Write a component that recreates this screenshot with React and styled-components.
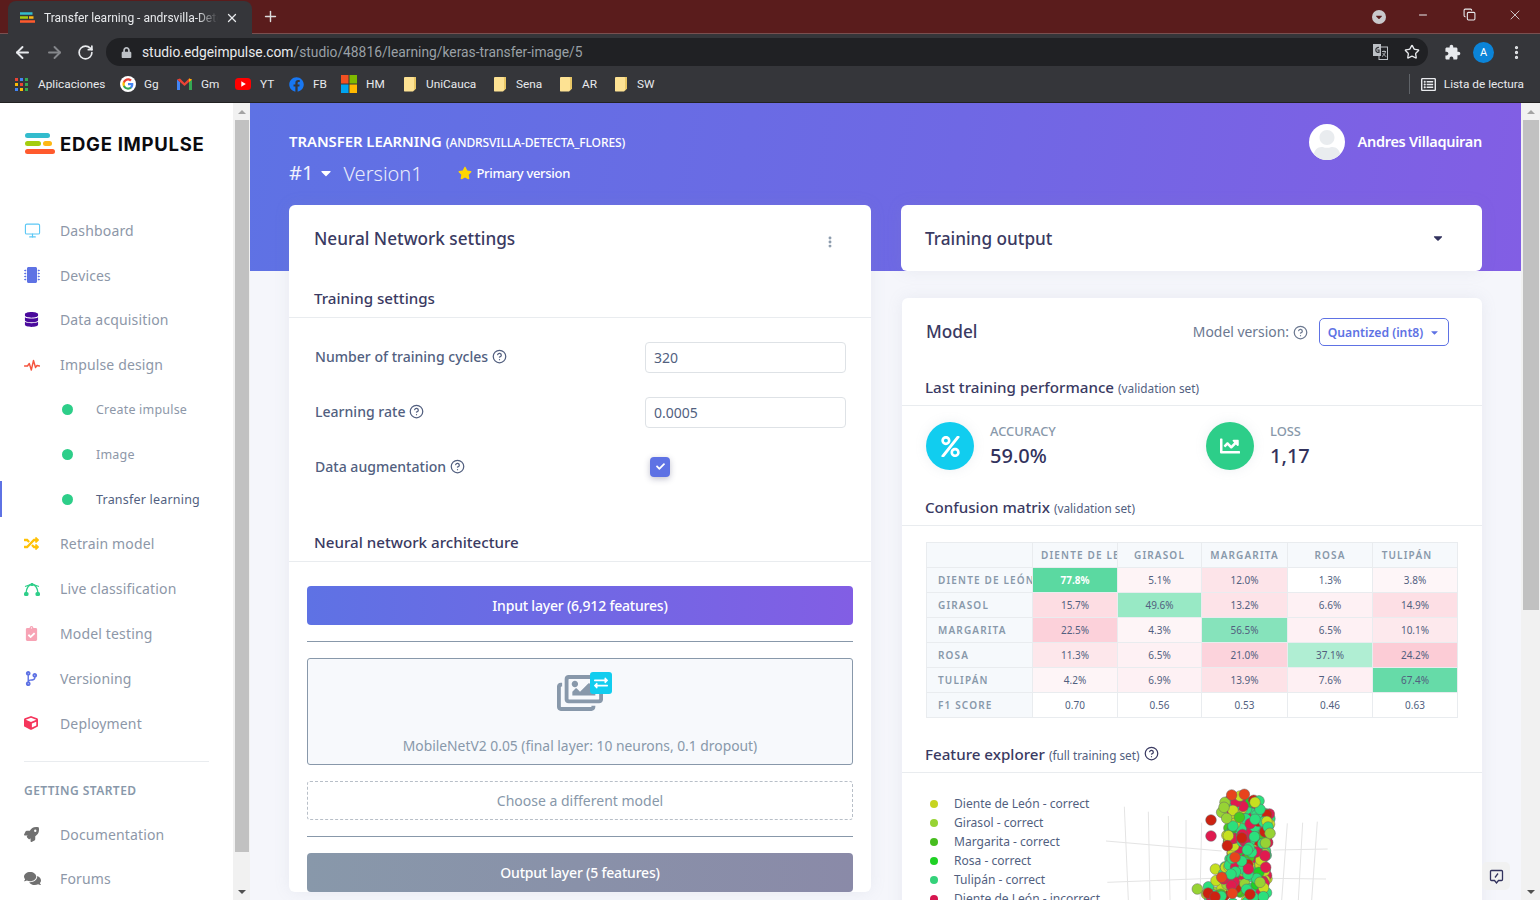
import React from 'react';
import styled, { createGlobalStyle } from 'styled-components';
import { ArrowLeft, ArrowRight, RotateCw, Star as StarLine, MoreVertical, Plus, X, Minus, Copy, Monitor, CircleHelp } from 'lucide-react';
import { FaLock, FaMicrochip, FaDatabase, FaRandom, FaClipboardCheck, FaCodeBranch, FaCube, FaRocket, FaComments, FaPercent, FaChartLine, FaRegImages, FaExchangeAlt, FaStar, FaCaretDown, FaRegListAlt, FaUser, FaFacebook, FaCheck } from 'react-icons/fa';

const GlobalStyle = createGlobalStyle`
  html, body { margin: 0; padding: 0; height: 900px; overflow: hidden; background: #fff; }
  * { box-sizing: border-box; }
  body { font-family: "Noto Sans", "Open Sans", sans-serif; }
`;

const Page = styled.div`width: 1540px; height: 900px; display: flex; flex-direction: column; overflow: hidden;`;

/* ---------- browser chrome ---------- */
const Browser = styled.header`flex: 0 0 103px; display: flex; flex-direction: column; font-family: Roboto, "Liberation Sans", sans-serif; color: #e8eaed; border-bottom: 1px solid #222;`;
const TabStrip = styled.div`height: 34px; background: #5a1c1c; display: flex; align-items: flex-end; padding-left: 8px; border-bottom: 1px solid #7a5050;`;
const Tab = styled.div`width: 244px; height: 33px; margin-bottom: -1px; background: #35363a; border-radius: 8px 8px 0 0; display: flex; align-items: center; padding: 0 12px; font-size: 12px; white-space: nowrap;`;
const TabTitle = styled.span`margin: 0 7px 0 9px; width: 174px; overflow: hidden; color: #e8eaed; -webkit-mask-image: linear-gradient(90deg, #000 88%, transparent); mask-image: linear-gradient(90deg, #000 88%, transparent);`;
const NewTab = styled.div`margin: 0 0 7px 8px; width: 20px; height: 20px; color: #ddd; display: flex; align-items: center; justify-content: center;`;
const WindowControls = styled.div`margin-left: auto; height: 33px; display: flex; align-items: center; padding: 0 2px 4px 0; color: #e8eaed;`;
const WinButton = styled.div`width: 46px; display: flex; justify-content: center; align-items: center;`;
const ProfileDot = styled.div`width: 14px; height: 14px; margin-right: 14px; margin-top: 5px; border-radius: 50%; background: #c9c9cc; color: #5a1c1c; display: flex; align-items: center; justify-content: center;`;
const Toolbar = styled.div`height: 32px; background: #35363a; display: flex; align-items: center; padding: 4px 0 0 13px;`;
const NavBtn = styled.div`width: 32px; display: flex; color: ${p => p.$dim ? '#85878b' : '#e8eaed'};`;
const Omnibox = styled.div`width: 1322px; height: 28px; margin-left: -3px; background: #202124; border-radius: 14px; display: flex; align-items: center; padding: 0 8px 0 15px; font-size: 13.8px;`;
const Url = styled.span`margin-left: 10px; color: #9aa0a6; flex: 1;`;
const UrlHost = styled.span`color: #e8eaed;`;
const OmniIcon = styled.span`display: flex; margin-left: ${p => p.$gap || 0}px; color: ${p => p.$c || '#e8eaed'};`;
const Account = styled.div`width: 21px; height: 21px; border-radius: 50%; background: #0b84d8; color: #fff; font-size: 11px; display: flex; align-items: center; justify-content: center; margin-left: 12px;`;
const BookmarkBar = styled.div`height: 36px; background: #35363a; display: flex; align-items: center; padding-left: 15px; font-size: 11.8px; color: #e8eaed;`;
const Bookmark = styled.div`width: ${p => p.$w}px; display: flex; align-items: center; gap: ${p => p.$gap || 9}px; white-space: nowrap;`;
const BarRule = styled.div`width: 1px; height: 20px; background: #5f6368; margin-left: auto; margin-right: 11px;`;
const ReadingList = styled.div`display: flex; align-items: center; gap: 8px; padding-right: 16px;`;
const Folder = styled.span`width: 12px; height: 15px; background: #fde293; border-radius: 1px; display: block; clip-path: polygon(0 0, 100% 0, 100% 80%, 75% 100%, 0 100%); box-shadow: inset -2px 0 0 #e9c766;`;

/* ---------- workspace ---------- */
const Workspace = styled.div`flex: 1; min-height: 0; display: flex;`;
const Sidebar = styled.aside`width: 233px; flex: none; background: #fff; display: flex; flex-direction: column; overflow: hidden;`;
const Brand = styled.div`height: 82px; padding: 30px 0 0 25px; display: flex; align-items: flex-start; gap: 5px;`;
const BrandName = styled.div`font-family: Inter, "Liberation Sans", sans-serif; font-weight: 700; font-size: 18.5px; letter-spacing: 0.72px; color: #0b0b10; line-height: 23px; white-space: nowrap;`;
const NavList = styled.nav`padding-top: 24.3px;`;
const NavItem = styled.div`height: ${p => p.$tall ? 45 : 44.8}px; display: flex; align-items: center; padding-left: ${p => p.$sub ? 62 : 24}px; font-size: ${p => p.$sub ? 12.5 : 14}px; letter-spacing: ${p => p.$sub ? 0.2 : 0.15}px; color: ${p => p.$active ? '#525f7f' : '#8d97a8'}; position: relative;
  ${p => p.$active ? `&::before { content: ""; position: absolute; left: 0; top: 4px; bottom: 4px; width: 2px; background: #5e72e4; }` : ''}
`;
const NavIcon = styled.span`width: 36px; flex: none; display: flex; color: ${p => p.$c};`;
const NavDot = styled.span`width: 11px; height: 11px; border-radius: 50%; background: #2dce89; margin-right: 23px; flex: none;`;
const SideRule = styled.hr`margin: 16px 24px 0; border: 0; border-top: 1px solid #e9ecef; width: 185px;`;
const SideHeading = styled.div`padding: 21px 0 13px 24px; font-size: 12px; font-weight: 600; letter-spacing: 0.45px; color: #8898aa; line-height: 16px;`;

const ScrollTrack = styled.div`width: ${p => p.$w}px; flex: none; background: #f1f1f1; display: flex; flex-direction: column; align-items: center; position: relative;`;
const ScrollArrow = styled.div`height: 17px; flex: none; display: flex; align-items: center; justify-content: center; margin-top: ${p => p.$auto ? 'auto' : '0'}; color: ${p => p.$dark ? '#505050' : '#a3a3a3'};`;
const Triangle = styled.span`width: 0; height: 0; border-left: 4px solid transparent; border-right: 4px solid transparent; ${p => p.$down ? 'border-top: 4px solid currentColor;' : 'border-bottom: 4px solid currentColor;'}`;
const ScrollThumb = styled.div`width: calc(100% - 3px); height: ${p => p.$h}px; background: #c1c1c1;`;

const Main = styled.main`flex: 1; min-width: 0; background: linear-gradient(100deg, #5e72e4 0%, #6f68e4 55%, #825ee4 100%) top / 100% 168px no-repeat, #f5f6fb; padding: 21px 39px 0; overflow: hidden; position: relative;`;
const TopRow = styled.div`display: flex; justify-content: space-between; align-items: center; height: 36px;`;
const PageTitle = styled.div`color: #fff; font-size: 14.8px; font-weight: 600; white-space: nowrap; padding-bottom: 2px;`;
const PageSub = styled.span`font-size: 12px; font-weight: 500; margin-left: 4px; letter-spacing: -0.1px;`;
const User = styled.div`display: flex; align-items: center; gap: 12px; color: #fff; font-size: 14.5px; font-weight: 600; letter-spacing: -0.28px;`;
const UserName = styled.span`padding-bottom: 2px;`;
const Avatar = styled.div`width: 36px; height: 36px; border-radius: 50%; background: #fff; color: #e9ecef; display: flex; align-items: flex-end; justify-content: center; overflow: hidden;`;
const VersionRow = styled.div`height: 28px; margin-bottom: 17px; padding-bottom: 2px; display: flex; align-items: center; color: #fff;`;
const VersionNo = styled.span`font-size: 20px; line-height: 26px; font-weight: 400; color: #f2f3fd;`;
const VersionName = styled.span`font-size: 20px; font-weight: 300; color: #e9ebfb; width: 115px; margin-left: 9px;`;
const Primary = styled.span`display: flex; align-items: center; gap: 4px; font-size: 13px; font-weight: 500; letter-spacing: -0.3px;`;
const Columns = styled.div`display: grid; grid-template-columns: 582px 581px; gap: 30px; align-items: start;`;
const Stack = styled.div`display: flex; flex-direction: column; gap: 27px;`;
const Card = styled.section`background: #fff; border-radius: 6px; box-shadow: 0 0 16px rgba(136,152,170,.12); margin-left: ${p => p.$inset || 0}px;`;
const CardHead = styled.div`height: 66px; padding: 0 25px 0 ${p => p.$pad || 25}px; display: flex; align-items: center; justify-content: space-between; font-size: 17.2px; font-weight: 500; color: #3a3a62;`;
const SectionHead = styled.div`height: ${p => p.$h || 47}px; padding: 0 ${p => p.$pad || 25}px ${p => p.$b || 9}px; display: flex; align-items: flex-end; font-size: 15.15px; font-weight: 500; color: #3a3a62; border-bottom: 1px solid #e9ecef;`;
const Small = styled.span`font-size: 11.8px; font-weight: 400; margin-left: 4px; color: #525f7f; padding-bottom: 1px;`;
const Form = styled.div`padding: 24px 25px 0 26px; display: flex; flex-direction: column; gap: 24px;`;
const FormRow = styled.div`display: flex; align-items: center; height: 31px;`;
const FormLabel = styled.div`width: 330px; display: flex; align-items: center; gap: 4px; font-size: 14.05px; font-weight: 500; color: #525f7f; padding-bottom: 2px;`;
const Field = styled.div`width: 201px; height: 31px; border: 1px solid #dee2e6; border-radius: 4px; padding: 0 8px; display: flex; align-items: center; font-size: 14px; color: #525f7f; background: #fff;`;
const Check = styled.div`width: 20px; height: 20px; margin: -2px 0 0 5px; border-radius: 4px; background: #5e72e4; color: #fff; display: flex; align-items: center; justify-content: center; box-shadow: 0 2px 6px rgba(50,50,93,.3);`;
const Arch = styled.div`padding: 24px 18px 0 18px; display: flex; flex-direction: column;`;
const LayerBar = styled.div`height: 39px; border-radius: 4px; display: flex; align-items: center; justify-content: center; font-size: 14px; font-weight: 500; color: #fff; letter-spacing: -0.2px; background: ${p => p.$muted ? 'linear-gradient(90deg,#8898aa,#8a8aa8)' : 'linear-gradient(90deg,#5e72e4,#825ee4)'};`;
const ArchRule = styled.hr`margin: 16px 0; border: 0; border-top: 1px solid #8898aa;`;
const ModelBox = styled.div`height: 107px; border: 1px solid #8898aa; border-radius: 3px; background: #f7f9fc; display: flex; flex-direction: column; align-items: center; padding-top: 13px; color: #8898aa; font-size: 13.85px;`;
const ModelIcon = styled.div`position: relative; width: 55px; height: 44px; margin: 0 0 20px 9px; color: #8898aa; display: flex; align-items: flex-end;`;
const SwapBadge = styled.span`position: absolute; right: 0; top: 0; width: 22px; height: 22px; border-radius: 3px; background: #11cdef; color: #fff; display: flex; align-items: center; justify-content: center;`;
const Dashed = styled.div`height: 39px; margin-top: 16px; border: 1px dashed #b8bfc8; border-radius: 3px; display: flex; align-items: center; justify-content: center; font-size: 14px; color: #8898aa;`;
const ModelTop = styled.div`height: 62px; padding: 20px 33px 0 24px; display: flex; align-items: flex-start; justify-content: space-between;`;
const ModelTitle = styled.div`font-size: 17.2px; font-weight: 500; color: #3a3a62; line-height: 28px;`;
const VersionPick = styled.div`display: flex; align-items: center; gap: 4px; font-size: 13.9px; color: #6b7890; height: 28px;`;
const VersionLabel = styled.span`padding-bottom: 2px;`;
const Select = styled.div`margin-left: 7px; width: 130px; height: 28px; border: 1px solid #5e72e4; border-radius: 5px; display: flex; align-items: center; justify-content: center; gap: 6px; color: #5e72e4; font-size: 12.2px; font-weight: 600;`;
const Metrics = styled.div`display: grid; grid-template-columns: 280px 1fr; padding: 16px 24px 0;`;
const Metric = styled.div`display: flex; gap: 16px; align-items: flex-start;`;
const MetricDisc = styled.div`width: 48px; height: 48px; border-radius: 50%; background: ${p => p.$c}; color: #fff; display: flex; align-items: center; justify-content: center; box-shadow: 0 0 12px rgba(136,152,170,.15);`;
const MetricLabel = styled.div`font-size: 12.9px; font-weight: 500; color: #8898aa; line-height: 16px; margin-top: 1px;`;
const MetricValue = styled.div`font-size: 20px; font-weight: 500; color: #32325d; line-height: 28px; margin-top: 3px;`;
const Matrix = styled.table`margin: 16px 0 0 24px; width: 531px; border-collapse: collapse; table-layout: fixed; font-size: 10px; color: #525f7f;`;
const MatrixHead = styled.th`height: 25px; border: 1px solid #e9ecef; background: #f6f9fc; color: #8898aa; font-weight: 600; font-size: 10px; letter-spacing: 1.15px; overflow: hidden; white-space: nowrap; text-align: ${p => p.$left ? 'left' : 'center'}; padding: 0 ${p => p.$left ? 0 : p.$tail ? 24 : 8}px 0 ${p => p.$left ? 11 : 8}px;`;
const MatrixCell = styled.td`height: 25px; border: 1px solid #e9ecef; background: ${p => p.$bg}; color: ${p => p.$strong ? '#fff' : '#525f7f'}; font-weight: ${p => p.$strong ? 700 : 400}; text-align: center; padding: 0;`;
const Explorer = styled.div`display: flex; padding: 21px 0 0 28px; height: 200px;`;
const Legend = styled.ul`list-style: none; margin: 0; padding: 0; width: 170px; flex: none;`;
const LegendItem = styled.li`height: 19px; display: flex; align-items: center; gap: 16px; font-size: 12.05px; color: #525f7f; white-space: nowrap;`;
const LegendDot = styled.span`width: 8px; height: 8px; border-radius: 50%; background: ${p => p.$c}; flex: none;`;
const Plot = styled.svg`margin-top: -14px; flex: none; display: block;`;
const Feedback = styled.button`position: absolute; right: 11px; bottom: 10px; width: 28px; height: 28px; border: 0; padding: 0; border-radius: 5px; background: #f1f1f1; color: #32325d; display: flex; align-items: center; justify-content: center;`;

/* ---------- drawings ---------- */
const LogoMark = () => (
  <svg width="30" height="21" viewBox="0 0 30 21">
    <rect x="0" y="0" width="25" height="5" rx="2.5" fill="#33bccd" />
    <rect x="0" y="8" width="16" height="5" rx="2.5" fill="#a4cd0e" />
    <rect x="18" y="8" width="9" height="5" rx="2.5" fill="#fdb714" />
    <rect x="0" y="16" width="30" height="5" rx="2.5" fill="#ff5a2d" />
  </svg>
);
const FavMark = () => (
  <svg width="15" height="13" viewBox="0 0 30 21" style={{ flex: 'none' }}>
    <rect x="0" y="0" width="25" height="5" fill="#33bccd" />
    <rect x="0" y="8" width="16" height="5" fill="#a4cd0e" />
    <rect x="18" y="8" width="9" height="5" fill="#fdb714" />
    <rect x="0" y="16" width="30" height="5" fill="#ff5a2d" />
  </svg>
);
const AppsGrid = () => (
  <svg width="13" height="13" viewBox="0 0 13 13">
    {['#ea4335', '#4285f4', '#34a853', '#fbbc05', '#ea4335', '#34a853', '#4285f4', '#fbbc05', '#34a853'].map((c, i) => (
      <rect key={i} x={(i % 3) * 5} y={Math.floor(i / 3) * 5} width="3" height="3" fill={c} />
    ))}
  </svg>
);
const GoogleG = () => (
  <svg width="16" height="16" viewBox="0 0 48 48">
    <circle cx="24" cy="24" r="24" fill="#fff" />
    <path fill="#4285f4" d="M40 24.6c0-1.2-.1-2.3-.3-3.4H24v6.5h9c-.4 2.1-1.6 3.9-3.4 5.1v4.2h5.5C38.3 33.9 40 29.6 40 24.6z" />
    <path fill="#34a853" d="M24 41c4.6 0 8.4-1.5 11.1-4.1l-5.5-4.2c-1.5 1-3.4 1.6-5.6 1.6-4.3 0-8-2.9-9.3-6.9H9v4.3C11.8 36.9 17.5 41 24 41z" />
    <path fill="#fbbc05" d="M14.7 27.4c-.7-2-.7-4.3 0-6.4v-4.3H9c-2.3 4.7-2.3 10.3 0 15z" />
    <path fill="#ea4335" d="M24 13.7c2.5 0 4.7.9 6.4 2.5l4.8-4.8C32.4 8.7 28.500 7 24 7c-6.500 0-12.200 4.100-15 9.700l5.700 4.300c1.300-4 5-7.300 9.300-7.300z" />
  </svg>
);
const GmailM = () => (
  <svg width="15" height="12" viewBox="0 0 15 12">
    <path d="M0 1.5 L0 12 L3 12 L3 4z" fill="#4285f4" />
    <path d="M15 1.5 L15 12 L12 12 L12 4z" fill="#34a853" />
    <path d="M0 1.5 L3 0.5 L7.5 5 L12 0.5 L15 1.5 L12 4 L7.5 8 L3 4z" fill="#ea4335" />
    <path d="M12 0.5 L15 1.5 L12 4z" fill="#fbbc05" />
  </svg>
);
const YouTube = () => (
  <svg width="16" height="12" viewBox="0 0 16 12">
    <rect width="16" height="12" rx="3.5" fill="#f00" />
    <path d="M6.3 3.3 L10.8 6 L6.3 8.7z" fill="#fff" />
  </svg>
);
const MsLogo = () => (
  <svg width="16" height="18" viewBox="0 0 16 18">
    <rect width="7.5" height="8.5" fill="#f25022" />
    <rect x="8.5" width="7.5" height="8.5" fill="#7fba00" />
    <rect y="9.5" width="7.5" height="8.5" fill="#00a4ef" />
    <rect x="8.5" y="9.5" width="7.5" height="8.5" fill="#ffb900" />
  </svg>
);
const Extension = () => (
  <svg width="17" height="17" viewBox="0 0 24 24" fill="currentColor">
    <path d="M20.5 11H19V7c0-1.1-.9-2-2-2h-4V3.5C13 2.12 11.88 1 10.5 1S8 2.12 8 3.5V5H4c-1.1 0-1.99.9-1.99 2v3.8H3.5c1.49 0 2.7 1.21 2.7 2.7s-1.21 2.7-2.7 2.7H2V20c0 1.1.9 2 2 2h3.8v-1.5c0-1.49 1.21-2.7 2.7-2.7 1.49 0 2.7 1.21 2.7 2.7V22H17c1.1 0 2-.9 2-2v-4h1.5c1.38 0 2.5-1.12 2.5-2.5S21.88 11 20.5 11z" />
  </svg>
);
const Translate = () => (
  <svg width="15" height="16" viewBox="0 0 15 16">
    <rect x="6" y="3" width="8.5" height="12.5" fill="#202124" stroke="#bdc1c6" />
    <rect x="0" y="0" width="8" height="12" fill="#bdc1c6" />
    <path d="M6 3.5 A2.5 2.5 0 1 0 6 8.3 V6 H4.2" fill="none" stroke="#35363a" strokeWidth="1.2" />
    <path d="M9 7.5 H13 M11 6.5 V7.5 M12.5 7.5 C12 10 10.5 11.5 9 12.5 M9.8 9 C10.5 10.5 12 12 13.3 12.5" fill="none" stroke="#bdc1c6" strokeWidth=".9" />
  </svg>
);
const Pulse = () => (
  <svg width="16" height="14" viewBox="0 0 16 14" fill="none" stroke="currentColor" strokeWidth="1.4" strokeLinejoin="round" strokeLinecap="round">
    <polyline points="0.5,8 3.5,8 5.3,5.5 7.3,12 9.5,2.5 11.5,9.5 13,7.5 15.5,8" />
  </svg>
);
const Bezier = () => (
  <svg width="16" height="14" viewBox="0 0 16 14" fill="none">
    <path d="M2 11 C2.8 5 5.5 2.5 8 2.5 C10.5 2.5 13.2 5 14 11" stroke="#2dce89" strokeWidth="1.3" />
    <path d="M1 4.5 L6 2.8 M15 4.5 L10 2.8" stroke="#2dce89" strokeWidth="1.1" />
    <rect x="6.5" y="1" width="3" height="3" rx="1" fill="#2dce89" />
    <rect x="0" y="10" width="4.5" height="4" rx="1.5" fill="#2dce89" />
    <rect x="11.5" y="10" width="4.5" height="4" rx="1.5" fill="#2dce89" />
  </svg>
);
const FeedbackGlyph = () => (
  <svg width="15" height="15" viewBox="0 0 15 15" fill="none" stroke="currentColor">
    <path d="M2.5 1.5 H12.5 A1 1 0 0 1 13.5 2.5 V10.5 A1 1 0 0 1 12.5 11.5 H9.5 L7.5 14 L5.5 11.5 H2.5 A1 1 0 0 1 1.5 10.5 V2.5 A1 1 0 0 1 2.5 1.5z" strokeWidth="1.3" />
    <path d="M6 8.5 L9 4.5" strokeWidth="1.3" />
  </svg>
);

const scatterColors = ['#e8431c', '#c6e01f', '#97d334', '#1fd124', '#2be07d', '#e01a4f', '#cc2211', '#46c81e'];
const plotPoints = (() => {
  const out = [];
  let s = 1234;
  const rnd = () => { s = (s * 16807) % 2147483647; return s / 2147483647; };
  const band = y => y < 90 ? [385, 480] : y < 170 ? [365, 515] : y < 260 ? [385, 505] : y < 320 ? [345, 505] : [315, 500];
  const mix = [5, 5, 4, 4, 4, 3, 7, 1, 1, 2, 6, 5, 4];
  for (let i = 0; i < 260; i++) {
    const y = 60 + rnd() * 310;
    const [a, b] = band(y);
    const c = mix[Math.floor(rnd() * mix.length)];
    out.push([a + rnd() * (b - a), y, scatterColors[c]]);
  }
  return out;
})();
const plotAccents = [
  [375, 67, 2], [365, 97, 2], [380, 115, 2], [372, 82, 2], [420, 48, 1], [480, 88, 4], [465, 67, 1], [418, 112, 7],
  [395, 45, 0], [433, 43, 0], [333, 120, 6], [333, 168, 5], [385, 167, 1], [405, 232, 0], [365, 292, 0],
  [397, 340, 0], [450, 343, 6], [292, 327, 2], [465, 118, 4], [442, 210, 4], [497, 262, 5], [510, 160, 2],
  [495, 227, 5], [463, 170, 4], [382, 197, 6], [445, 267, 5], [480, 307, 2], [345, 350, 6], [490, 350, 4],
].map(([x, y, c]) => [x, y, scatterColors[c]]);
const gridLines = ['73,80 85,360', '145,95 150,360', '205,108 210,360', '258,120 258,360', '305,128 300,360', '562,130 545,360', '608,128 595,360', '652,125 635,360', '18,183 365,213', '520,210 683,207', '22,307 335,295', '500,295 678,297'];

const Scatter = () => (
  <Plot width="240" height="120" viewBox="0 0 720 360">
    {gridLines.map(l => <polyline key={l} points={l} fill="none" stroke="#e4e4e4" strokeWidth="3" />)}
    {[...plotPoints, ...plotAccents].map(([x, y, c], i) => (
      <circle key={i} cx={x} cy={y} r="16" fill={c} stroke="#666" strokeWidth="1.5" />
    ))}
  </Plot>
);

/* ---------- data ---------- */
const bookmarks = [
  { w: 105, icon: <AppsGrid />, label: 'Aplicaciones', gap: 10 },
  { w: 57, icon: <GoogleG />, label: 'Gg', gap: 8 },
  { w: 58, icon: <GmailM />, label: 'Gm' },
  { w: 54, icon: <YouTube />, label: 'YT' },
  { w: 52, icon: <FaFacebook size={15} color="#1877f2" />, label: 'FB' },
  { w: 63, icon: <MsLogo />, label: 'HM' },
  { w: 90, icon: <Folder />, label: 'UniCauca', gap: 10 },
  { w: 66, icon: <Folder />, label: 'Sena', gap: 10 },
  { w: 55, icon: <Folder />, label: 'AR', gap: 10 },
  { w: 50, icon: <Folder />, label: 'SW', gap: 10 },
];
const nav = [
  { label: 'Dashboard', icon: <Monitor size={17} strokeWidth={1.6} />, c: '#5cc8f5' },
  { label: 'Devices', icon: <FaMicrochip size={16} />, c: '#5e72e4' },
  { label: 'Data acquisition', icon: <FaDatabase size={15} />, c: '#4a0a9c' },
  { label: 'Impulse design', icon: <Pulse />, c: '#f5533d' },
  { label: 'Create impulse', sub: true },
  { label: 'Image', sub: true },
  { label: 'Transfer learning', sub: true, active: true },
  { label: 'Retrain model', icon: <FaRandom size={15} />, c: '#ffc107' },
  { label: 'Live classification', icon: <Bezier />, c: '#2dce89' },
  { label: 'Model testing', icon: <FaClipboardCheck size={15} />, c: '#f7a3b5' },
  { label: 'Versioning', icon: <FaCodeBranch size={15} />, c: '#5e72e4' },
  { label: 'Deployment', icon: <FaCube size={14} />, c: '#f5365c' },
];
const help = [
  { label: 'Documentation', icon: <FaRocket size={15} />, c: '#707070' },
  { label: 'Forums', icon: <FaComments size={17} />, c: '#707070' },
];
const classes = ['Diente de León', 'Girasol', 'Margarita', 'Rosa', 'Tulipán'];
const matrix = [
  [['77.8%', '#5bd9a1', true], ['5.1%', '#fef4f6'], ['12.0%', '#fde4e9'], ['1.3%', '#ffffff'], ['3.8%', '#fef6f8']],
  [['15.7%', '#fddde3'], ['49.6%', '#98e9c5'], ['13.2%', '#fde3e8'], ['6.6%', '#fef1f4'], ['14.9%', '#fddfe5']],
  [['22.5%', '#fcd1da'], ['4.3%', '#fef5f7'], ['56.5%', '#86e3bb'], ['6.5%', '#fef1f4'], ['10.1%', '#fde9ed']],
  [['11.3%', '#fde7eb'], ['6.5%', '#fef1f4'], ['21.0%', '#fcd3dc'], ['37.1%', '#b0eed3'], ['24.2%', '#fcccd6']],
  [['4.2%', '#fef5f7'], ['6.9%', '#fef1f4'], ['13.9%', '#fde2e7'], ['7.6%', '#fef0f3'], ['67.4%', '#66dba8']],
];
const f1 = ['0.70', '0.56', '0.53', '0.46', '0.63'];
const legend = [
  ['Diente de León - correct', '#c6d41f'], ['Girasol - correct', '#97d334'], ['Margarita - correct', '#47bd1f'],
  ['Rosa - correct', '#1fd124'], ['Tulipán - correct', '#34d27a'], ['Diente de León - incorrect', '#d6164f'],
];

const Scrollbar = ({ w, thumb }) => (
  <ScrollTrack $w={w}>
    <ScrollArrow><Triangle /></ScrollArrow>
    <ScrollThumb $h={thumb} />
    <ScrollArrow $auto $dark><Triangle $down /></ScrollArrow>
  </ScrollTrack>
);

export default function App() {
  return (
    <Page>
      <GlobalStyle />
      <Browser>
        <TabStrip>
          <Tab>
            <FavMark />
            <TabTitle>Transfer learning - andrsvilla-Dete</TabTitle>
            <X size={14} strokeWidth={2.2} />
          </Tab>
          <NewTab><Plus size={17} strokeWidth={2} /></NewTab>
          <WindowControls>
            <ProfileDot><FaCaretDown size={10} /></ProfileDot>
            <WinButton><Minus size={12} /></WinButton>
            <WinButton><Copy size={13} /></WinButton>
            <WinButton><X size={16} strokeWidth={1.2} /></WinButton>
          </WindowControls>
        </TabStrip>
        <Toolbar>
          <NavBtn><ArrowLeft size={19} strokeWidth={2.4} /></NavBtn>
          <NavBtn $dim><ArrowRight size={19} strokeWidth={2.4} /></NavBtn>
          <NavBtn><RotateCw size={17} strokeWidth={2.4} /></NavBtn>
          <Omnibox>
            <FaLock size={11} color="#bdc1c6" />
            <Url><UrlHost>studio.edgeimpulse.com</UrlHost>/studio/48816/learning/keras-transfer-image/5</Url>
            <OmniIcon><Translate /></OmniIcon>
            <OmniIcon $gap={16}><StarLine size={16} /></OmniIcon>
          </Omnibox>
          <OmniIcon $gap={16}><Extension /></OmniIcon>
          <Account>A</Account>
          <OmniIcon $gap={14}><MoreVertical size={17} strokeWidth={2.6} /></OmniIcon>
        </Toolbar>
        <BookmarkBar>
          {bookmarks.map(b => <Bookmark key={b.label} $w={b.w} $gap={b.gap}>{b.icon}{b.label}</Bookmark>)}
          <BarRule />
          <ReadingList><FaRegListAlt size={15} />Lista de lectura</ReadingList>
        </BookmarkBar>
      </Browser>
      <Workspace>
        <Sidebar>
          <Brand><LogoMark /><BrandName>EDGE IMPULSE</BrandName></Brand>
          <NavList>
            {nav.map(n => (
              <NavItem key={n.label} $sub={n.sub} $active={n.active}>
                {n.sub ? <NavDot /> : <NavIcon $c={n.c}>{n.icon}</NavIcon>}
                {n.label}
              </NavItem>
            ))}
          </NavList>
          <SideRule />
          <SideHeading>GETTING STARTED</SideHeading>
          {help.map(n => (
            <NavItem key={n.label} $tall><NavIcon $c={n.c}>{n.icon}</NavIcon>{n.label}</NavItem>
          ))}
        </Sidebar>
        <Scrollbar w={17} thumb={732} />
        <Main>
          <TopRow>
            <PageTitle>TRANSFER LEARNING<PageSub>(ANDRSVILLA-DETECTA_FLORES)</PageSub></PageTitle>
            <User><Avatar><FaUser size={30} /></Avatar><UserName>Andres Villaquiran</UserName></User>
          </TopRow>
          <VersionRow>
            <VersionNo>#1</VersionNo>
            <FaCaretDown size={16} style={{ marginLeft: 5 }} />
            <VersionName>Version1</VersionName>
            <Primary><FaStar size={14} color="#ffd600" />Primary version</Primary>
          </VersionRow>
          <Columns>
            <Card>
              <CardHead>Neural Network settings<MoreVertical size={14} color="#8898aa" strokeWidth={3} style={{ marginRight: 9, marginTop: 8 }} /></CardHead>
              <SectionHead>Training settings</SectionHead>
              <Form>
                <FormRow>
                  <FormLabel>Number of training cycles <CircleHelp size={15} /></FormLabel>
                  <Field>320</Field>
                </FormRow>
                <FormRow>
                  <FormLabel>Learning rate <CircleHelp size={15} /></FormLabel>
                  <Field>0.0005</Field>
                </FormRow>
                <FormRow>
                  <FormLabel>Data augmentation <CircleHelp size={15} /></FormLabel>
                  <Check><FaCheck size={9} /></Check>
                </FormRow>
              </Form>
              <SectionHead $h={79}>Neural network architecture</SectionHead>
              <Arch>
                <LayerBar>Input layer (6,912 features)</LayerBar>
                <ArchRule />
                <ModelBox>
                  <ModelIcon>
                    <FaRegImages size={46} />
                    <SwapBadge><FaExchangeAlt size={14} /></SwapBadge>
                  </ModelIcon>
                  MobileNetV2 0.05 (final layer: 10 neurons, 0.1 dropout)
                </ModelBox>
                <Dashed>Choose a different model</Dashed>
                <ArchRule />
                <LayerBar $muted>Output layer (5 features)</LayerBar>
              </Arch>
            </Card>
            <Stack>
              <Card>
                <CardHead $pad={24}>Training output<FaCaretDown size={14} color="#32325d" style={{ marginRight: 12 }} /></CardHead>
              </Card>
              <Card $inset={1}>
                <ModelTop>
                  <ModelTitle>Model</ModelTitle>
                  <VersionPick><VersionLabel>Model version:</VersionLabel> <CircleHelp size={15} /><Select>Quantized (int8)<FaCaretDown size={11} /></Select></VersionPick>
                </ModelTop>
                <SectionHead $h={46} $b={8} $pad={23}>Last training performance<Small>(validation set)</Small></SectionHead>
                <Metrics>
                  <Metric>
                    <MetricDisc $c="#11cdef"><FaPercent size={21} /></MetricDisc>
                    <div><MetricLabel>ACCURACY</MetricLabel><MetricValue>59.0%</MetricValue></div>
                  </Metric>
                  <Metric>
                    <MetricDisc $c="#2dce89"><FaChartLine size={20} /></MetricDisc>
                    <div><MetricLabel>LOSS</MetricLabel><MetricValue>1,17</MetricValue></div>
                  </Metric>
                </Metrics>
                <SectionHead $h={56} $b={8} $pad={23}>Confusion matrix<Small>(validation set)</Small></SectionHead>
                <Matrix>
                  <colgroup>
                    <col style={{ width: 106 }} /><col style={{ width: 85 }} /><col style={{ width: 84 }} /><col style={{ width: 86 }} /><col style={{ width: 85 }} /><col style={{ width: 85 }} />
                  </colgroup>
                  <thead>
                    <tr>
                      <MatrixHead />
                      {classes.map((c, i) => <MatrixHead key={c} $tail={i === classes.length - 1}>{c.toUpperCase()}</MatrixHead>)}
                    </tr>
                  </thead>
                  <tbody>
                    {matrix.map((row, r) => (
                      <tr key={classes[r]}>
                        <MatrixHead $left>{classes[r].toUpperCase()}</MatrixHead>
                        {row.map(([v, bg, strong], c) => <MatrixCell key={c} $bg={bg} $strong={strong}>{v}</MatrixCell>)}
                      </tr>
                    ))}
                    <tr>
                      <MatrixHead $left>F1 SCORE</MatrixHead>
                      {f1.map(v => <MatrixCell key={v} $bg="#fff">{v}</MatrixCell>)}
                    </tr>
                  </tbody>
                </Matrix>
                <SectionHead $h={55} $b={8} $pad={23}>Feature explorer<Small>(full training set)</Small><CircleHelp size={15} style={{ marginLeft: 4, marginBottom: 3 }} /></SectionHead>
                <Explorer>
                  <Legend>
                    {legend.map(([t, c]) => <LegendItem key={t}><LegendDot $c={c} />{t}</LegendItem>)}
                  </Legend>
                  <Scatter />
                </Explorer>
              </Card>
            </Stack>
          </Columns>
          <Feedback aria-label="Feedback"><FeedbackGlyph /></Feedback>
        </Main>
        <Scrollbar w={19} thumb={490} />
      </Workspace>
    </Page>
  );
}
